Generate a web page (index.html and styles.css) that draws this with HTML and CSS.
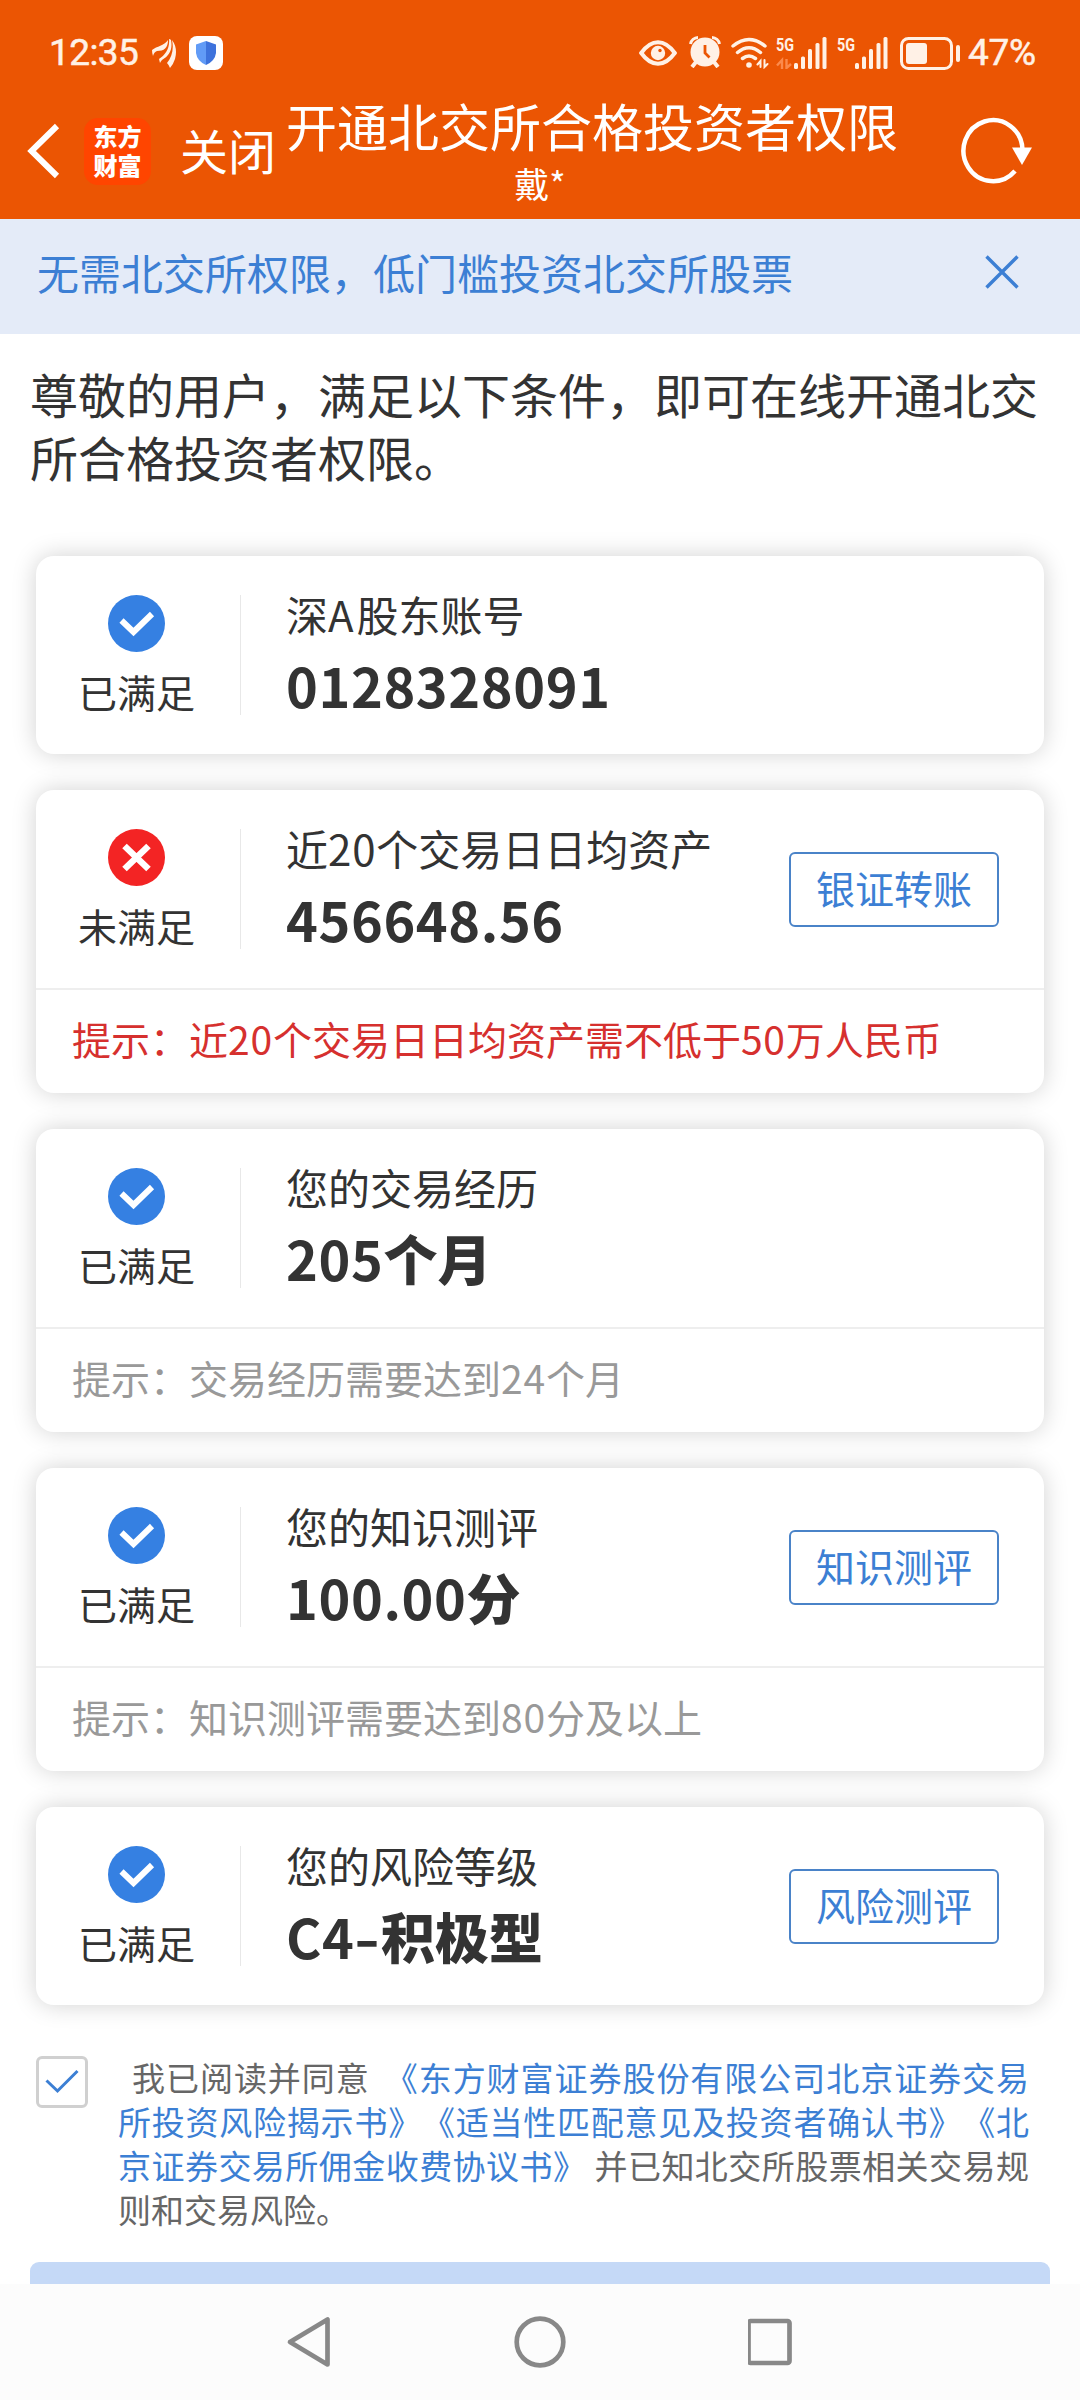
FILE: index.html
```html
<!DOCTYPE html>
<html lang="zh-CN">
<head>
<meta charset="utf-8">
<title>开通北交所合格投资者权限</title>
<link rel="stylesheet" href="styles.css">
</head>
<body>
<svg class="defs" width="0" height="0" aria-hidden="true">
  <symbol id="ok" viewBox="0 0 57 57"><circle cx="28.5" cy="28.5" r="28.5" fill="#3580e2"/><path d="M13.5 25.500 25.500 37 44 19" fill="none" stroke="#fff" stroke-width="6"/></symbol>
  <symbol id="bad" viewBox="0 0 57 57"><circle cx="28.5" cy="28.5" r="28.5" fill="#f32424"/><path d="M16.500 17 40.500 40M40.500 17 16.500 40" fill="none" stroke="#fff" stroke-width="6.500"/></symbol>
</svg>
<div class="screen">
  <div class="status">
    <span class="time">12:35</span>
    <svg class="leaf" width="25" height="30" viewBox="0 0 25 30" fill="#fff1e6"><path d="M0 11C5 7 12 7 16 1C16 9 12 12 5 12Q2 13 1 17Q0 14 0 11ZM7 20C13 16 18 10 17 0Q18 0 19 1C21 11 17 17 10 21Q9 22 8 24ZM15 24C20 18 22 10 20 1Q26 9 23 20Q21 26 18 29Q17 26 15 24Z"/></svg>
    <span class="shield"><svg width="20" height="24" viewBox="0 0 20 24"><path d="M10 0 20 3.500V12Q19 20 10 24Z" fill="#3d72dc"/><path d="M10 0 0 3.500V12Q1 20 10 24Z" fill="#619bf6"/></svg></span>
    <span class="spacer"></span>
    <svg class="eye" width="38" height="26" viewBox="0 0 38 26"><path d="M2.200 13Q10 2.200 19 2.200T35.800 13Q28 23.800 19 23.800T2.200 13Z" fill="none" stroke="#fff1e6" stroke-width="4"/><circle cx="19" cy="13" r="7.200" fill="#fff1e6"/><circle cx="21" cy="10.500" r="1.700" fill="#eb5503"/></svg>
    <svg class="alarm" width="32" height="32" viewBox="0 0 32 32"><path d="M1.500 8A8 8 0 0 1 9 1.500M30.500 8A8 8 0 0 0 23 1.500" fill="none" stroke="#fff1e6" stroke-width="3"/><path d="M7 26 3 31M25 26 29 31" stroke="#fff1e6" stroke-width="4"/><circle cx="16" cy="16" r="14.500" fill="#fff1e6"/><path d="M16 9V17L20.500 21.500" fill="none" stroke="#eb5503" stroke-width="2.800"/></svg>
    <svg class="wifi" width="38" height="32" viewBox="0 0 38 32" fill="none" stroke="#fff1e6" stroke-width="3.500" stroke-linecap="round"><path d="M2 9Q18 -4 34 9M6.500 15.500Q18 6 29.500 15.500M11.500 21.500Q18 16.500 24.500 21.500"/><circle cx="18" cy="28" r="2.800" fill="#fff1e6" stroke="none"/><path d="M29.500 30V24L26.500 27.500M33.500 23V30L36.500 27" stroke-width="2"/></svg>
    <svg class="signal" width="52" height="40" viewBox="0 -8 52 40" fill="#fff1e6"><text x="0" y="14" class="g5" textLength="18" lengthAdjust="spacingAndGlyphs">5G</text><g fill="none" stroke="#fb8a4c" stroke-width="2.400"><path d="M6 32V23L1 28.500M10.500 22V31L15 27"/></g><rect x="18" y="26" width="4" height="6" rx="1.500"/><rect x="25" y="19.500" width="4" height="12.500" rx="1.500"/><rect x="32" y="12" width="4" height="20" rx="1.500"/><rect x="39.500" y="6" width="4" height="26" rx="1.500"/><rect x="46.500" y="0" width="4" height="32" rx="1.500"/></svg>
    <svg class="signal second" width="52" height="40" viewBox="0 -8 52 40" fill="#fff1e6"><text x="0" y="14" class="g5" textLength="18" lengthAdjust="spacingAndGlyphs">5G</text><rect x="18" y="26" width="4" height="6" rx="1.500"/><rect x="25" y="19.500" width="4" height="12.500" rx="1.500"/><rect x="32" y="12" width="4" height="20" rx="1.500"/><rect x="39.500" y="6" width="4" height="26" rx="1.500"/><rect x="46.500" y="0" width="4" height="32" rx="1.500"/></svg>
    <svg class="battery" width="61" height="33" viewBox="0 0 61 33"><rect x="1.500" y="1.500" width="50" height="30" rx="7" fill="none" stroke="#fff1e6" stroke-width="3"/><rect x="6" y="6" width="21" height="21" rx="3" fill="#fff1e6"/><rect x="56" y="8" width="4" height="17" rx="2" fill="#fff1e6"/></svg>
    <span class="percent">47%</span>
  </div>
  <div class="header">
    <div class="left">
      <svg class="back" width="34" height="58" viewBox="0 0 34 58"><path d="M30 4 4.500 29 30 54" fill="none" stroke="#fff" stroke-width="6"/></svg>
      <div class="logo">东方<br>财富</div>
      <span class="close">关闭</span>
    </div>
    <div class="titles"><h1>开通北交所合格投资者权限</h1><p>戴*</p></div>
    <svg class="refresh" width="74" height="70" viewBox="0 0 74 70"><path d="M62.500 34A29.500 30.500 0 1 0 55 55" fill="none" stroke="#fff" stroke-width="4.500"/><path d="M52 31.500H72L62 49Z" fill="#fff"/></svg>
  </div>
  <div class="banner"><span>无需北交所权限，低门槛投资北交所股票</span><svg width="34" height="34" viewBox="0 0 34 34"><path d="M1.500 1.500 32.500 32.500M32.500 1.500 1.500 32.500" stroke="#3c7fd4" stroke-width="3.400"/></svg></div>
  <p class="intro">尊敬的用户，满足以下条件，即可在线开通北交所合格投资者权限。</p>
  <div class="cards">
    <section class="card"><div class="row">
      <div class="state"><svg width="57" height="57"><use href="#ok"/></svg><span>已满足</span></div>
      <div class="info"><h2>深<i class="cap">A</i>股东账号</h2><strong>0128328091</strong></div>
    </div></section>
    <section class="card"><div class="row">
      <div class="state"><svg width="57" height="57"><use href="#bad"/></svg><span>未满足</span></div>
      <div class="info"><h2>近<i>20</i>个交易日日均资产</h2><strong>456648.56</strong></div>
      <button>银证转账</button>
    </div><p class="hint red">提示：近<i>20</i>个交易日日均资产需不低于<i>50</i>万人民币</p></section>
    <section class="card"><div class="row">
      <div class="state"><svg width="57" height="57"><use href="#ok"/></svg><span>已满足</span></div>
      <div class="info"><h2>您的交易经历</h2><strong>205<b>个月</b></strong></div>
    </div><p class="hint">提示：交易经历需要达到<i>24</i>个月</p></section>
    <section class="card"><div class="row">
      <div class="state"><svg width="57" height="57"><use href="#ok"/></svg><span>已满足</span></div>
      <div class="info"><h2>您的知识测评</h2><strong>100.00<b>分</b></strong></div>
      <button>知识测评</button>
    </div><p class="hint">提示：知识测评需要达到<i>80</i>分及以上</p></section>
    <section class="card"><div class="row">
      <div class="state"><svg width="57" height="57"><use href="#ok"/></svg><span>已满足</span></div>
      <div class="info"><h2>您的风险等级</h2><strong><em>C4</em><em class="dash">-</em><b>积极型</b></strong></div>
      <button>风险测评</button>
    </div></section>
  </div>
  <div class="agree">
    <span class="box"><svg width="34" height="26" viewBox="0 0 34 26"><path d="M1.500 11.500 12.500 22 32.500 2" fill="none" stroke="#3c7fd4" stroke-width="3"/></svg></span>
    <p><span class="lead">我已阅读并同意</span><a>《东方财富证券股份有限公司北京证券交易所投资风险揭示书》《适当性匹配意见及投资者确认书》《北京证券交易所佣金收费协议书》</a><span class="tail">并已知北交所股票相关交易规则和交易风险。</span></p>
  </div>
  <div class="submit"></div>
  <div class="nav">
    <svg width="46" height="52" viewBox="0 0 46 52"><path d="M41.500 3.500V48.500L4 26Z"/></svg>
    <svg width="52" height="52" viewBox="0 0 52 52"><circle cx="26" cy="26" r="23.300"/></svg>
    <svg width="46" height="52" viewBox="0 0 46 52"><rect x="0.500" y="5" width="41" height="42" rx="2"/></svg>
  </div>
</div>
</body>
</html>
```
FILE: styles.css
```css
* { box-sizing: border-box; margin: 0; padding: 0; }
body { background: #fff; font-family: "Noto Sans CJK SC", sans-serif; color: #333; text-spacing-trim: space-all; }
i, em { font-style: normal; }
i { letter-spacing: .8px; }
i.cap { letter-spacing: 3px; }
svg { flex: none; display: block; }
.defs { display: none; }
.screen { width: 1080px; height: 2400px; display: flex; flex-direction: column; overflow: hidden; }

.status { height: 104px; flex: none; background: #eb5503; color: #fff1e6; display: flex; align-items: flex-start; padding: 36px 43px 0 49px; font: 400 37px/34px Roboto, sans-serif; }
.status .time { width: 103px; letter-spacing: -.6px; -webkit-text-stroke: .5px #fff1e6; }
.leaf { margin-top: 3px; }
.shield { width: 34px; height: 34px; margin-left: 12px; background: #fff; border-radius: 8px; display: flex; align-items: center; justify-content: center; }
.spacer { flex: 1; }
.eye { margin: 4px 12px 0 0; }
.alarm { margin: 0 10px 0 0; }
.wifi { margin: 1px 7px 0 0; }
.signal { margin: -7px 9px 0 0; }
.second { margin-right: 11px; }
.g5 { font: 700 19px Roboto, sans-serif; }
.battery { margin: 1px 7px 0 0; }
.percent { width: 69px; white-space: nowrap; letter-spacing: -.3px; -webkit-text-stroke: .5px #fff1e6; }

.header { height: 115px; flex: none; background: #eb5503; color: #fff; display: flex; }
.left { width: 286px; display: flex; align-items: center; padding: 0 0 21px 27px; }
.logo { width: 67px; height: 67px; margin-left: 23px; border-radius: 14px; background: #ff4500; font-size: 24px; font-weight: 900; line-height: 29px; text-align: center; padding-top: 3px; }
.close { margin-left: 29px; font-size: 48px; line-height: 60px; margin-top: -5px; }
.titles { width: 612px; }
.titles h1 { font-size: 51px; font-weight: 400; line-height: 56px; white-space: nowrap; margin-top: -7px; }
.titles p { width: 508px; font-size: 35px; line-height: 44px; text-align: center; margin-top: 8px; }
.refresh { margin: 12px 0 0 62px; }

.banner { height: 115px; flex: none; background: #e4ebf8; color: #3c7fd4; display: flex; align-items: center; justify-content: space-between; padding: 0 61px 9px 37px; font-size: 42px; line-height: 60px; }
.intro { padding: 28px 30px 0; font-size: 48px; line-height: 63px; height: 222px; flex: none; }

.cards { display: flex; flex-direction: column; gap: 36px; padding: 0 36px; }
.card { border-radius: 18px; background: #fff; box-shadow: 0 0 24px rgba(0,0,0,.18); }
.row { height: 198px; padding: 39px 45px 39px 0; display: flex; align-items: center; }
.state { width: 205px; height: 120px; padding-right: 3px; border-right: 1px solid #e8e8e8; display: flex; flex-direction: column; align-items: center; font-size: 39px; line-height: 50px; }
.state span { margin-top: 14px; }
.info { flex: 1; height: 120px; padding-left: 45px; }
.info h2 { font-size: 42px; font-weight: 400; line-height: 50px; margin-top: -6px; white-space: nowrap; }
.info strong { display: block; font-size: 54px; font-weight: 700; line-height: 64px; margin-top: 14px; letter-spacing: .6px; white-space: nowrap; }
.info b { letter-spacing: 0; }
.dash { display: inline-block; transform: scaleX(1.3); transform-origin: 0 50%; margin-right: 6px; }
button { width: 210px; height: 75px; border: 2px solid #4a83c8; border-radius: 6px; background: #fff; color: #3c7fd4; font: 39px/60px "Noto Sans CJK SC", sans-serif; padding-bottom: 4px; }
.hint { height: 105px; border-top: 2px solid #eee; padding: 17px 36px 0; font-size: 39px; line-height: 63px; color: #999; }
.red { color: #d6302e; }

.agree { display: flex; padding: 50px 51px 0 36px; height: 257px; flex: none; }
.box { width: 52px; height: 52px; margin-top: 1px; flex: none; border: 3px solid #d0d0d0; border-radius: 6px; display: flex; align-items: center; justify-content: center; }
.agree p { flex: 1; margin-left: 30px; font-size: 33px; line-height: 44px; color: #666; text-align: justify; }
.agree a { color: #3c7fd4; }
.lead { margin: 0 15px 0 14px; }
.tail { margin-left: 8px; }
.submit { height: 22px; flex: none; margin: 0 30px; background: #c5d9f7; border-radius: 9px 9px 0 0; }
.nav { flex: 1; background: #fcfcfc; display: flex; padding: 32px 286px 0; justify-content: space-between; }
.nav svg { fill: none; stroke: #888; stroke-width: 4.700; stroke-linejoin: round; }
```
